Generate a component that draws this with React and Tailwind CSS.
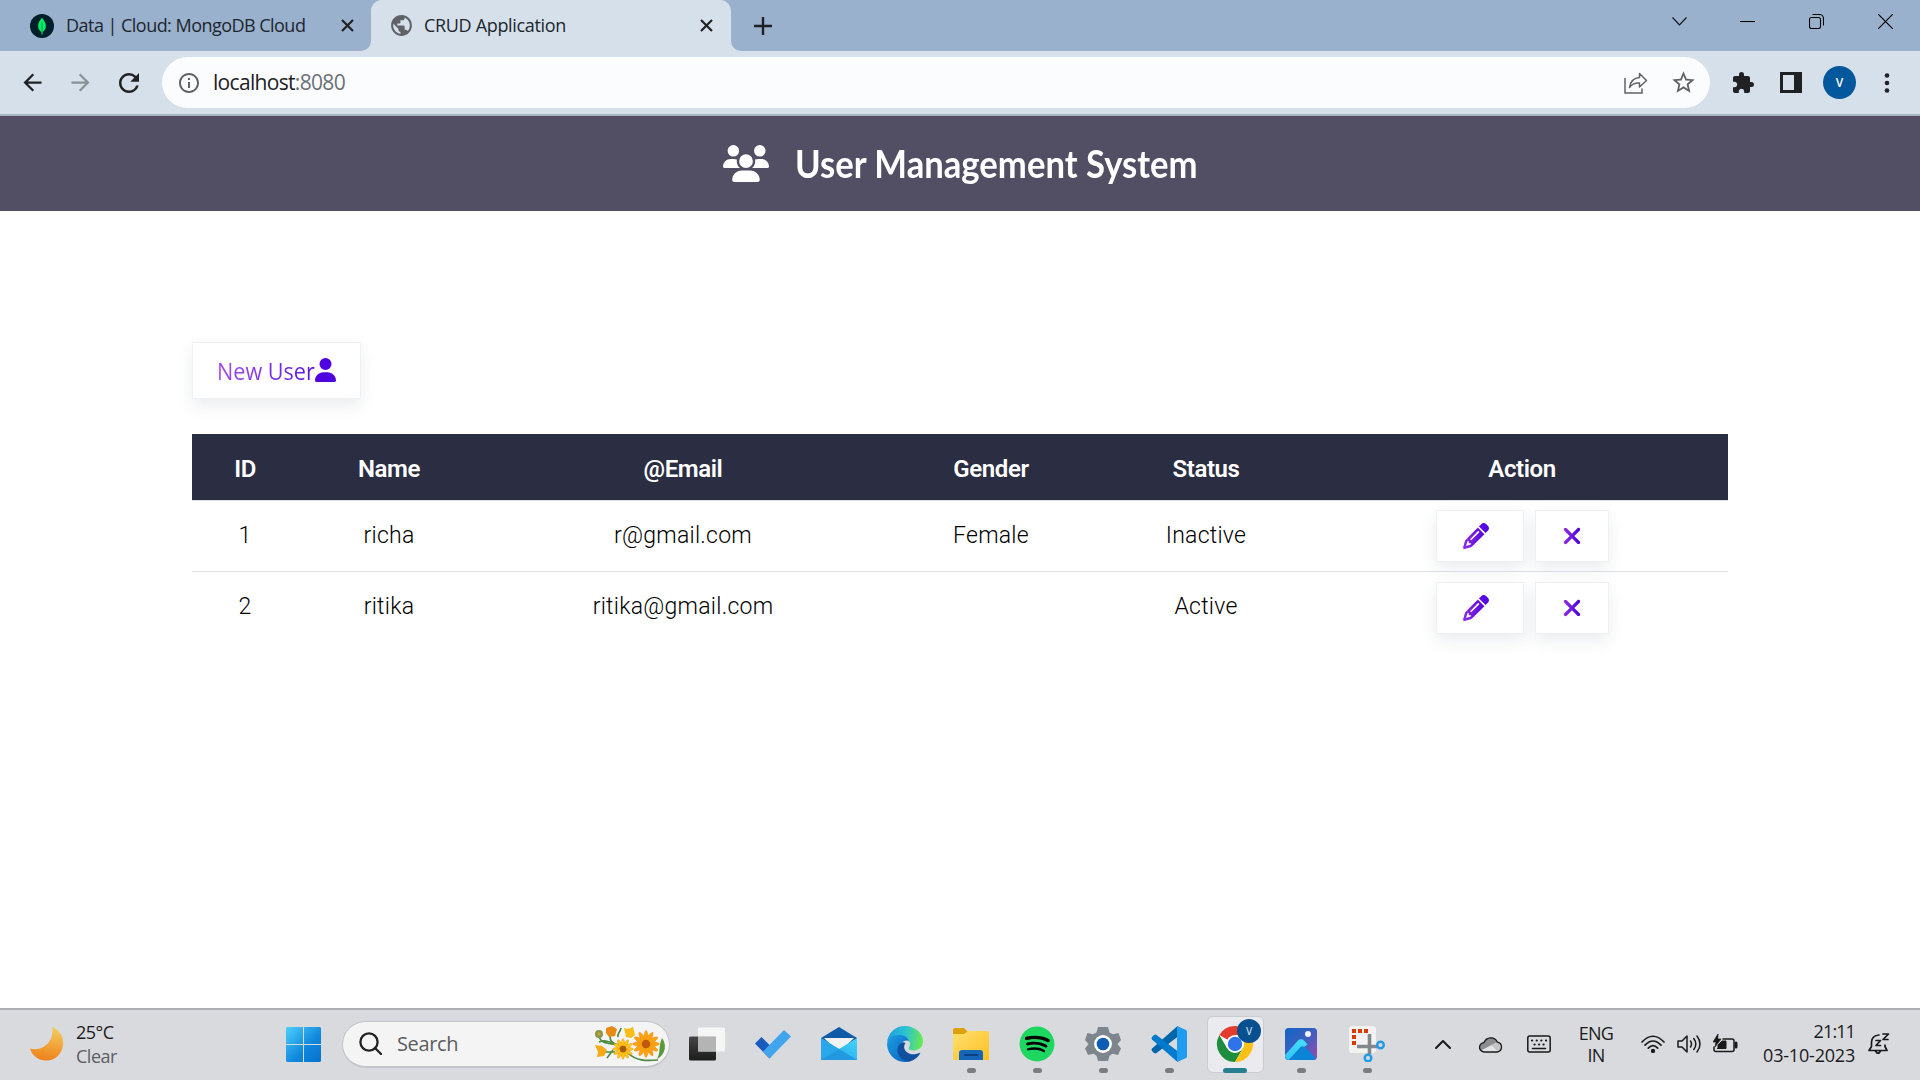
import React from "react";
import { FaUsers, FaUser, FaPencil, FaXmark, FaSpotify } from "react-icons/fa6";
import { MdArrowBack, MdArrowForward, MdRefresh, MdInfoOutline, MdStarBorder, MdExtension, MdPublic } from "react-icons/md";

const SEGOE = "font-['Open_Sans','Noto_Sans',sans-serif]";

function TabClose({ className }) {
  return (
    <svg className={className} width="13" height="13" viewBox="0 0 13 13" stroke="#202124" strokeWidth="2.2">
      <path d="M1 1 12 12M12 1 1 12" />
    </svg>
  );
}

function TabStrip() {
  return (
    <div className="flex h-[51px] bg-[#99b1cd]">
      <div className="flex h-full w-[371px] items-center pl-[30px]">
        <svg width="24" height="24" viewBox="0 0 24 24">
          <circle cx="12" cy="12" r="12" fill="#001e2b" />
          <path d="M12 3.6c.5 1.6 3.9 4 3.9 8.3 0 3.3-2.2 5.4-3.4 6.2l-.2 2.4h-.7l-.2-2.4c-1.2-.8-3.3-2.9-3.3-6.2 0-4.300 3.400-6.700 3.900-8.300z" fill="#00ed64" />
          <path d="M12 8v12.500" stroke="#00a34a" strokeWidth="1" />
        </svg>
        <span className="ml-[12px] w-[275px] whitespace-nowrap text-[18px] tracking-[-0.53px] text-[#20262e]">Data | Cloud: MongoDB Cloud</span>
        <TabClose />
      </div>
      <div className="relative flex h-full w-[360px] items-center rounded-t-[11px] bg-[#d6e0ea] pl-[18px]">
        <svg className="absolute bottom-0 -left-[10px]" width="10" height="10" viewBox="0 0 10 10">
          <path d="M10 0v10H0A10 10 0 0 0 10 0z" fill="#d6e0ea" />
        </svg>
        <svg className="absolute -right-[10px] bottom-0" width="10" height="10" viewBox="0 0 10 10">
          <path d="M0 0v10h10A10 10 0 0 1 0 0z" fill="#d6e0ea" />
        </svg>
        <MdPublic size={25} color="#5f6368" />
        <span className="ml-[10px] w-[276px] whitespace-nowrap text-[18px] tracking-[-0.33px] text-[#20262e]">CRUD Application</span>
        <TabClose />
      </div>
      <div className="flex items-center pl-[23px]">
        <svg width="18" height="18" viewBox="0 0 18 18" stroke="#202124" strokeWidth="2.4">
          <path d="M9 0v18M0 9h18" />
        </svg>
      </div>
      <div className="ml-auto flex h-[43px] items-center pr-[27px]">
        <svg width="15" height="9" viewBox="0 0 15 9" fill="none" stroke="#111" strokeWidth="1.100"><path d="M.5.5l7 7.500 7-7.500" /></svg>
        <svg className="ml-[53px]" width="15" height="2" viewBox="0 0 15 2"><path d="M0 .5h15" stroke="#000" strokeWidth="1.100" /></svg>
        <svg className="ml-[54px]" width="15" height="15" viewBox="0 0 15 15" fill="none" stroke="#000" strokeWidth="1.100">
          <rect x=".5" y="3.500" width="11" height="11" rx="2" />
          <path d="M3.500.5h7a4 4 0 0 1 4 4v7" />
        </svg>
        <svg className="ml-[54px]" width="15" height="15" viewBox="0 0 15 15" stroke="#000" strokeWidth="1.200"><path d="M0 0l15 15M15 0 0 15" /></svg>
      </div>
    </div>
  );
}

function Toolbar() {
  return (
    <div className="flex h-[65px] items-center border-b-2 border-[#a9b5bf] bg-[#d6e0ea] pl-[19px]">
      <MdArrowBack size={27} color="#202124" />
      <MdArrowForward className="ml-[21px]" size={27} color="#8b9199" />
      <MdRefresh className="ml-[20px]" size={30} color="#202124" />
      <div className="ml-[18px] flex h-[51px] w-[1548px] items-center rounded-full bg-[#fbfcfe] pl-[15px]">
        <MdInfoOutline size={24} color="#5f6368" />
        <span className="ml-[12px] whitespace-nowrap text-[21px] tracking-[-0.68px] text-[#202124]">
          localhost<span className="text-[#6b7076]">:8080</span>
        </span>
        <svg className="ml-auto" width="24" height="22" viewBox="0 0 24 22" fill="none" stroke="#5f6368" strokeWidth="1.500">
          <path d="M1 6v15h17v-4.500" />
          <path d="M15.500 1.500 22.500 8.500 15.500 15v-4c-4.500-.3-7.500 1-10 4.500.8-5.500 4-9.500 10-10z" strokeLinejoin="round" />
        </svg>
        <MdStarBorder className="mr-[13px] ml-[22px]" size={27} color="#5f6368" />
      </div>
      <MdExtension className="ml-[21px]" size={24} color="#202124" />
      <svg className="ml-[25px]" width="22" height="21" viewBox="0 0 22 21">
        <path fill="#202124" fillRule="evenodd" d="M0 0h22v21H0zM3 3v15h11V3z" />
      </svg>
      <div className="ml-[21px] flex size-[33px] items-center justify-center rounded-full bg-[#03579d] text-[12px] font-semibold text-white">V</div>
      <svg className="ml-[28px]" width="6" height="20" viewBox="0 0 6 20" fill="#202124">
        <circle cx="3" cy="2.500" r="2.300" /><circle cx="3" cy="10" r="2.300" /><circle cx="3" cy="17.500" r="2.300" />
      </svg>
    </div>
  );
}

const COLS = "grid grid-cols-[106px_182px_406px_210px_220px_412px] text-center";
const BTN = "flex items-center border border-[#edf1f4] bg-white shadow-[0_7px_16px_rgba(40,60,90,0.09)]";

function Row({ id, name, email, gender, status, last }) {
  return (
    <div className={`${COLS} h-[71px] items-center text-[23px] font-light tracking-[0.25px] text-black ${last ? "" : "border-b border-[#dee2e6]"}`}>
      <span>{id}</span>
      <span>{name}</span>
      <span>{email}</span>
      <span>{gender}</span>
      <span>{status}</span>
      <div className="flex pl-[120px]">
        <div className={`${BTN} h-[52px] w-[88px] pl-[26px]`}><FaPencil size={26} fill="url(#violet)" /></div>
        <div className={`${BTN} ml-[11px] h-[52px] w-[74px] justify-center`}><FaXmark size={26} fill="url(#violet)" /></div>
      </div>
    </div>
  );
}

function Page() {
  return (
    <main className="h-[892px] bg-white">
      <svg className="absolute" width="0" height="0">
        <linearGradient id="violet" x1="0" x2="1" y1="0" y2="0">
          <stop offset="0" stopColor="#8e2de2" />
          <stop offset="1" stopColor="#4a00e0" />
        </linearGradient>
      </svg>
      <header className="flex h-[95px] items-center bg-[#524e63] pl-[723px] text-white">
        <FaUsers className="h-[37px] w-[46px]" />
        <h1 className="ml-[26px] origin-left scale-x-[0.912] whitespace-nowrap font-['Lato',sans-serif] text-[38px] font-bold">User Management System</h1>
      </header>
      <div className="px-[192px] pt-[131px]">
        <div className={`${BTN} h-[57px] w-[169px] pl-[24px]`}>
          <span className="-mr-[11px] w-[109px] shrink-0 origin-left scale-x-[0.9] bg-gradient-to-r from-[#a24be8] to-[#5c0ae0] bg-clip-text text-[24px] leading-[30px] whitespace-nowrap text-transparent">New User</span>
          <FaUser className="mb-[2px] h-[24px] w-[21px]" fill="#4f03df" />
        </div>
        <div className="mt-[35px] font-['Roboto',sans-serif]">
          <div className={`${COLS} h-[66px] items-center bg-[#2b2d42] pt-[4px] text-[24px] font-semibold tracking-[-0.4px] text-white`}>
            <span>ID</span><span>Name</span><span>@Email</span><span>Gender</span><span>Status</span><span>Action</span>
          </div>
          <div className="h-px bg-[#dee2e6]" />
          <Row id="1" name="richa" email="r@gmail.com" gender="Female" status="Inactive" />
          <Row id="2" name="ritika" email="ritika@gmail.com" gender="" status="Active" last />
        </div>
      </div>
    </main>
  );
}

function Flower({ x, y, r, color, core }) {
  return (
    <g transform={`translate(${x} ${y})`}>
      {[0, 30, 60, 90, 120, 150].map((a) => (
        <ellipse key={a} rx={r} ry={r * 0.2} fill={color} stroke="#ee8a0a" strokeWidth=".4" transform={`rotate(${a})`} />
      ))}
      <circle r={r * 0.32} fill={core} />
    </g>
  );
}

function Flowers() {
  return (
    <svg width="72" height="38" viewBox="0 0 72 38">
      <g fill="none" stroke="#4c8a3c" strokeWidth="1.600">
        <path d="M5 10c1 8 6 8 20 10M16 11c0 5 2 7 8 9M27 3c-1 5-4 5-3 9M9 27h12M13 33l6-8M34 28c8 8 18 8 30 7M5 17c5-2 8-1 14 1" />
      </g>
      <path d="M68 13c6 8 2 18-5 21 4-7 1-12 5-21z" fill="#5a9a3c" />
      <circle cx="5" cy="9" r="4" fill="#87964a" /><circle cx="5" cy="9" r="1.700" fill="#c8a23a" />
      <path d="M12 3l6-2 5 3-2 7-6 1-3-4z" fill="#e98a16" />
      <path d="M30 3l4 1 5-2 2 8-4 3-5-1z" fill="#fbbd14" />
      <path d="M1 20l7 1 5 4-3 6-7 1 1-5z" fill="#f7a917" />
      <Flower x={29} y={24} r={10.5} color="#ffc61a" core="#a85a0a" />
      <Flower x={52} y={19} r={13.5} color="#fba312" core="#c0580c" />
    </svg>
  );
}

function AppCell({ children, dot, active }) {
  return (
    <div className="relative flex h-full w-[66px] items-center justify-center">
      {active && <div className="absolute top-[6px] h-[57px] w-[57px] rounded-[6px] border border-[#cbccd2] bg-[#ebebef]" />}
      <div className="relative">{children}</div>
      {dot && <div className="absolute top-[58px] h-[5px] w-[9px] rounded-full bg-[#7b7b80]" />}
      {active && <div className="absolute top-[58px] h-[5px] w-[24px] rounded-full bg-[#26808f]" />}
    </div>
  );
}

function TaskIcons() {
  return (
    <>
      <AppCell>
        <svg width="36" height="36" viewBox="0 0 36 36">
          <defs><linearGradient id="tv" x1="0" y1="0" x2="0" y2="1"><stop stopColor="#454545" /><stop offset="1" stopColor="#1c1c1c" /></linearGradient></defs>
          <rect y="10.500" width="27" height="24" rx="1.500" fill="url(#tv)" />
          <rect x="9" y="1.500" width="27" height="24" rx="1.500" fill="#fafafa" opacity=".85" />
          <path d="M9 10.500h18v15H9z" fill="#b4b4b4" />
        </svg>
      </AppCell>
      <AppCell>
        <svg width="36" height="36" viewBox="0 0 36 36">
          <path d="M0 17.500 6.500 11l14 14-6 7.500z" fill="#185abd" />
          <path d="M29 4l7 6.500L14.500 32.500 8 25.500z" fill="#41a5ee" />
        </svg>
      </AppCell>
      <AppCell>
        <svg width="36" height="36" viewBox="0 0 36 36">
          <defs><linearGradient id="ml" x1="0" y1="1" x2="1" y2="0"><stop stopColor="#1f9fe8" /><stop offset="1" stopColor="#45d6fa" /></linearGradient></defs>
          <path d="M0 12 18 1l18 11v10H0z" fill="#0f5ba8" />
          <path d="M3 12h30L18 27z" fill="#f3f3f3" />
          <path d="M0 12l18 11 18-11v22H0z" fill="url(#ml)" />
          <path d="M0 12l36 22H0z" fill="#28a8ea" /><path d="M18 23l18 11H0z" fill="#1a86d8" opacity=".45" />
        </svg>
      </AppCell>
      <AppCell>
        <svg width="36" height="36" viewBox="0 0 36 36">
          <defs>
            <linearGradient id="e1" x1="0" y1=".4" x2="1" y2=".5"><stop stopColor="#1a9fe0" /><stop offset=".5" stopColor="#2cc3d2" /><stop offset="1" stopColor="#6bea4c" /></linearGradient>
            <linearGradient id="e2" x1="0" y1="0" x2="1" y2="1"><stop stopColor="#1b9de2" /><stop offset="1" stopColor="#0a62c0" /></linearGradient>
          </defs>
          <path d="M0 17C1 6 9 0 18 0c10 0 18 7 18 15 0 6-4 9.500-9 9.500-4 0-6-1.500-5-3 3-5-1-9-6-10C8 10 3 12 0 17z" fill="url(#e1)" />
          <path d="M0 18C1 12 6 9 12 9c5 0 8.500 2 10 6-5-2-9 2-9 8 0 7 5 12 11 12A18 18 0 0 1 0 18z" fill="url(#e2)" />
          <path d="M14 17c-4 3-5 9-1 14 3 4 8 5 11 4 4-1 8-5 9.500-8.500-7 3.500-14 1.500-16-3.500-1-2.500 0-4.500 1-6-2-1-3-1-4.500 0z" fill="#10519f" />
        </svg>
      </AppCell>
      <AppCell dot>
        <svg width="36" height="36" viewBox="0 0 36 36">
          <defs><linearGradient id="fx" x1="0" y1="0" x2="1" y2="1"><stop stopColor="#ffdf70" /><stop offset="1" stopColor="#fdc021" /></linearGradient></defs>
          <path d="M0 4q0-2 2-2h9l4 4v6H0z" fill="#dda009" />
          <path d="M0 8h11l4-3h19q2 0 2 2v27H0z" fill="url(#fx)" />
          <path d="M6 34V27q0-3 3-3h18q3 0 3 3v7z" fill="#1467b8" /><path d="M11 29h14" stroke="#0b3f80" strokeWidth="2" />
        </svg>
      </AppCell>
      <AppCell dot>
        <div className="flex size-[36px] items-center justify-center bg-[radial-gradient(circle,#000_60%,transparent_61%)]">
          <FaSpotify size={36} color="#1ed760" />
        </div>
      </AppCell>
      <AppCell dot>
        <svg width="36" height="36" viewBox="0 0 36 36">
          <path d="M13 1h10l1.500 5.500 3.500 1.800L33.500 7 36 14l-3.500 4L36 22.500 33 29l-5.500-1.200-3 2L23 35H13l-1.500-5.200-3-2L3 29l-3-6.500L3.500 18 0 14l2.500-7L8 8.300l3.500-1.800z" fill="#7e868d" strokeLinejoin="round" />
          <circle cx="18" cy="18" r="8.900" fill="#fff" /><circle cx="18" cy="18" r="6.300" fill="#0f5cb4" />
        </svg>
      </AppCell>
      <AppCell dot>
        <svg width="36" height="36" viewBox="0 0 36 36">
          <path d="M26.500 0 1 22.500q-1 1.300 0 2.500l2 2q1.300.8 2.500 0L27 10.500z" fill="#0065a9" />
          <path d="M26.500 36 1 13.500Q0 12 1 11l2-2q1.300-.8 2.500 0L27 25.500z" fill="#007acc" />
          <path d="M26 0l9 4q1 .6 1 1.500v25q0 1-1 1.500l-9 4z" fill="#1f9cf0" />
        </svg>
      </AppCell>
      <AppCell active>
        <svg width="46" height="46" viewBox="-5 -5 46 46">
          <circle cx="18" cy="18" r="18" fill="#fff" />
          <path d="M18 18 2.400 9A18 18 0 0 1 33.600 9H18z" fill="#e33b2e" />
          <path d="M2.400 9A18 18 0 0 0 18 36l7.800-13.500L18 18l-7.800 4.500z" fill="#1e8e3e" />
          <path d="M33.600 9A18 18 0 0 1 18 36l7.800-13.500Q28 15 23 9z" fill="#fbc116" />
          <circle cx="18" cy="18" r="9" fill="#fff" /><circle cx="18" cy="18" r="7.200" fill="#2f73ea" />
        </svg>
        <div className="absolute -top-[2px] right-[-3px] flex size-[24px] items-center justify-center rounded-full bg-[#07508f] text-[10px] font-semibold text-[#b9d4ea]">V</div>
      </AppCell>
      <AppCell dot>
        <svg width="32" height="32" viewBox="0 0 32 32">
          <defs>
            <linearGradient id="ph" x1="0" y1="0" x2="1" y2="1"><stop stopColor="#1265c4" /><stop offset=".5" stopColor="#3c5fc0" /><stop offset="1" stopColor="#9a4bae" /></linearGradient>
            <linearGradient id="p2" x1="0" y1="1" x2="1" y2="0"><stop stopColor="#2fc4f4" /><stop offset="1" stopColor="#46e0fa" /></linearGradient>
          </defs>
          <rect width="32" height="32" rx="3.500" fill="url(#ph)" />
          <path d="M3 31 17 16l14 14q-1 2-3 2H4z" fill="#0b84d8" />
          <path d="M0 27 13 12.500q3-2.500 6 0l3.500 4L19 19q-2-1.500-4 .5L3.500 31.900Q0 31 0 28z" fill="url(#p2)" />
          <circle cx="23" cy="6" r="3" fill="#f4f2fb" />
        </svg>
      </AppCell>
      <AppCell dot>
        <svg width="36" height="36" viewBox="0 0 36 36">
          <rect width="27" height="27" rx="3" fill="#f3f3f4" />
          <path d="M3 5h17M5 3v17" stroke="#d83b01" strokeWidth="4" strokeDasharray="4 2" fill="none" />
          <path d="M20.500 8v20M8 20.500h20" stroke="#84888c" strokeWidth="3.600" />
          <circle cx="31.500" cy="19" r="3.300" fill="none" stroke="#1f9be2" strokeWidth="2.400" />
          <circle cx="19" cy="32" r="3.300" fill="none" stroke="#1f9be2" strokeWidth="2.400" />
        </svg>
      </AppCell>
    </>
  );
}

function Tray() {
  const line = { fill: "none", stroke: "#1a1a1a", strokeWidth: 1.5, strokeLinecap: "round", strokeLinejoin: "round" };
  return (
    <div className="flex h-full w-[520px] items-center pl-[35px] text-[18px] text-[#1b1b1b]">
      <svg width="16" height="9" viewBox="0 0 16 9" {...line} strokeWidth="2"><path d="M1 8l7-7 7 7" /></svg>
      <svg className="ml-[28px]" width="24" height="17" viewBox="0 0 24 17">
        <path d="M5.500 16A4.700 4.700 0 0 1 5 6.600 7.300 7.300 0 0 1 18.500 6.200 5 5 0 0 1 18.500 16z" fill="#8d8d8f" />
        <path d="M3 14 12.500 9l8 6-2 1h-13z" fill="#e4e4e6" />
        <path d="M12 9l5-2.500 5 2v5l-3 2z" fill="#c4c4c6" />
        <path d="M5.500 16A4.700 4.700 0 0 1 5 6.600 7.300 7.300 0 0 1 18.500 6.200 5 5 0 0 1 18.500 16z" {...line} strokeWidth="1.300" />
      </svg>
      <svg className="ml-[24px]" width="24" height="18" viewBox="0 0 24 18" {...line}>
        <rect x=".8" y="1" width="22.400" height="16" rx="2" />
        <path d="M5 5.500h.1M9.700 5.500h.1M14.300 5.500h.1M19 5.500h.1M7.500 9.500h.1M12 9.500h.1M16.500 9.500h.1" strokeWidth="2.200" />
        <path d="M5.500 13.500h13" />
      </svg>
      <div className="ml-[26px] w-[38px] text-center leading-[22px] tracking-[-0.7px]">ENG<br />IN</div>
      <svg className="ml-[26px]" width="24" height="18" viewBox="0 0 24 18" {...line} strokeWidth="1.700">
        <path d="M1 7Q12-4.500 23 7M4 10.200q8-8.400 16 0M7.300 13.200q4.700-5 9.400 0" />
        <circle cx="12" cy="16" r="1.300" fill="#1a1a1a" />
      </svg>
      <svg className="ml-[12px]" width="24" height="20" viewBox="0 0 24 20" {...line}>
        <path d="M1 7h4l5-5v16l-5-5H1zM13.500 7q2 3 0 6M16.800 4.500q4 5.500 0 11M20 2q6 8 0 16" />
      </svg>
      <svg className="ml-[12px]" width="25" height="20" viewBox="0 0 25 20" {...line}>
        <path d="M10 5h9q2 0 2 2v8.500q0 2-2 2H3q-2 0-2-2V13" />
        <path d="M5 14v-3l4-4h4v7.500H4.500z" fill="#1a1a1a" strokeWidth="1" />
        <path d="M5 0 0 8h3L2 13l6-8H5z" fill="#1a1a1a" strokeWidth=".7" />
        <path d="M23 9v4" strokeWidth="3" />
      </svg>
      <div className="mb-[2px] ml-[19px] w-[98px] text-right leading-[24px] tracking-[-0.2px]"><span className="tracking-[-0.9px]">21:11</span><br />03-10-2023</div>
      <svg className="mb-[2px] ml-[13px]" width="22" height="23" viewBox="0 0 22 23" {...line} strokeWidth="1.700">
        <path d="M11 3Q4 3.500 3.500 10v4.500L1 18.500h18l-2-4V13M7.500 19q2.500 4.500 5 0" />
        <path d="M8 8.500h4.500L8 13.500h4.500M15 2h5.500L15 7.500h5" />
      </svg>
    </div>
  );
}

function Taskbar() {
  return (
    <div className="flex h-[72px] items-center border-t-2 border-[#acacb2] bg-[#d9dade] pb-[2px]">
      <div className="flex h-full w-[674px] items-center pl-[30px]">
        <svg width="34" height="34" viewBox="0 0 34 34">
          <defs><linearGradient id="mo" x1=".5" y1="0" x2=".3" y2="1"><stop stopColor="#f4c95a" /><stop offset="1" stopColor="#ee7f1a" /></linearGradient></defs>
          <path d="M22 0C30 3 34 10 33 18 32 27 25 34 16 33.500 9 33.500 2 29 0 21.500 13 25 25 14 22 0z" fill="url(#mo)" />
        </svg>
        <div className="mb-[1px] ml-[12px] w-[210px] text-[18px] leading-[24px] tracking-[-0.5px] text-[#1b1b1b]">25°C<br /><span className="text-[#5d5e62]">Clear</span></div>
        <svg width="35" height="35" viewBox="0 0 35 35">
          <defs><linearGradient id="wi" x1="0" y1="0" x2="1" y2="1"><stop stopColor="#4dd0fb" /><stop offset=".6" stopColor="#0f86dc" /><stop offset="1" stopColor="#0673d0" /></linearGradient></defs>
          <path fill="url(#wi)" d="M1 0h16v17H0V1zM18 0h16l1 1v16H18zM0 18h17v17H1l-1-1zM18 18h17v16l-1 1H18z" />
        </svg>
        <div className="ml-[21px] flex h-[47px] w-[328px] items-center rounded-full border border-b-2 border-[#c4c5ca] bg-[#f4f4f5] pl-[16px]">
          <svg width="23" height="23" viewBox="0 0 23 23" fill="none" stroke="#222" strokeWidth="2.300"><circle cx="10" cy="10" r="8.600" /><path d="M16 16l6 6" strokeLinecap="round" /></svg>
          <span className="ml-[15px] w-[197px] text-[20px] tracking-[-0.35px] text-[#5c5d60]">Search</span>
          <Flowers />
        </div>
      </div>
      <TaskIcons />
      <Tray />
    </div>
  );
}

export default function App() {
  return (
    <div className={`h-[1080px] w-[1920px] overflow-hidden ${SEGOE}`}>
      <TabStrip />
      <Toolbar />
      <Page />
      <Taskbar />
    </div>
  );
}
